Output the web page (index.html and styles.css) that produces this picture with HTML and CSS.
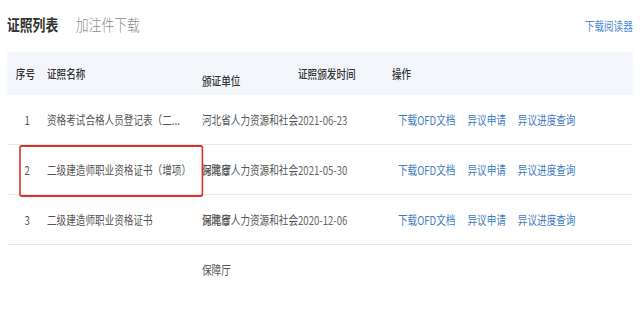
FILE: index.html
```html
<!DOCTYPE html>
<html lang="zh-CN">
<head>
<meta charset="utf-8">
<title>证照列表</title>
<link rel="stylesheet" href="styles.css">
</head>
<body>
<div class="frame">
<div class="page">
  <div class="topbar">
    <div class="tabs">
      <span class="tab tab-active">证照列表</span>
      <span class="tab">加注件下载</span>
    </div>
    <a class="reader">下载阅读器</a>
  </div>
  <div class="table">
    <div class="row head">
      <div class="c-no">序号</div>
      <div class="c-name">证照名称</div>
      <div class="c-unit">颁证单位</div>
      <div class="c-date">证照颁发时间</div>
      <div class="c-op">操作</div>
    </div>
    <div class="row">
      <div class="c-no">1</div>
      <div class="c-name">资格考试合格人员登记表（二...</div>
      <div class="c-unit">河北省人力资源和社会保障厅</div>
      <div class="c-date">2021-06-23</div>
      <div class="c-op"><a>下载OFD文档</a><a>异议申请</a><a>异议进度查询</a></div>
    </div>
    <div class="row marked">
      <div class="c-no">2</div>
      <div class="c-name">二级建造师职业资格证书（增项）</div>
      <div class="c-unit">河北省人力资源和社会保障厅</div>
      <div class="c-date">2021-05-30</div>
      <div class="c-op"><a>下载OFD文档</a><a>异议申请</a><a>异议进度查询</a></div>
      <div class="mark"></div>
    </div>
    <div class="row">
      <div class="c-no">3</div>
      <div class="c-name">二级建造师职业资格证书</div>
      <div class="c-unit">河北省人力资源和社会保障厅</div>
      <div class="c-date">2020-12-06</div>
      <div class="c-op"><a>下载OFD文档</a><a>异议申请</a><a>异议进度查询</a></div>
    </div>
  </div>
</div>
</div>
</body>
</html>
```
FILE: styles.css
```css
html, body {
  margin: 0;
  padding: 0;
  background: #fff;
  overflow: hidden;
}
.frame {
  width: 640px;
  height: 320px;
  overflow: hidden;
}
.page {
  width: 800px;
  transform: scaleX(0.8);
  transform-origin: 0 0;
  padding: 0 9px 0 8.75px;
  box-sizing: border-box;
  font-family: "Noto Sans CJK SC", "Noto Sans", sans-serif;
  font-size: 12px;
  color: #555;
}
.topbar {
  height: 52px;
  display: flex;
  align-items: center;
  justify-content: space-between;
  padding-bottom: 4px;
  box-sizing: border-box;
}
.tabs {
  display: flex;
  gap: 22px;
  align-items: center;
}
.tab {
  font-size: 16px;
  color: #8a8a8a;
  font-weight: 300;
}
.tab-active {
  color: #333;
  font-weight: 700;
}
.reader {
  color: #4a8ad0;
  font-size: 12px;
  margin-top: 2px;
}
.table {
  display: flex;
  flex-direction: column;
}
.row {
  display: flex;
  height: 50px;
  line-height: 50px;
  border-bottom: 1px solid #e8e8e8;
  box-sizing: border-box;
  position: relative;
}
.row.head {
  height: 43px;
  line-height: 43px;
  background: #f3f7fc;
  border-bottom: none;
  color: #333;
  font-weight: 500;
}
.c-no {
  width: 50px;
  padding-left: 22px;
  box-sizing: border-box;
  flex: none;
}
.head .c-no {
  padding-left: 11px;
}
.c-name {
  width: 193.75px;
  flex: none;
  white-space: nowrap;
}
.c-unit {
  width: 120px;
  flex: none;
}
.head .c-unit {
  padding-top: 14px;
  line-height: 29px;
}
.c-date {
  width: 117.5px;
  flex: none;
  color: #666;
}
.head .c-date {
  color: #333;
}
.c-op {
  flex: 1;
  display: flex;
  gap: 15px;
  padding-left: 7.5px;
}
.head .c-op {
  padding-left: 0;
}
.c-op a {
  color: #3d7cc2;
}
.mark {
  position: absolute;
  left: 15px;
  top: 0;
  width: 230px;
  height: 52px;
  border: 2px solid #d8322d;
  border-left-width: 2.5px;
  border-right-width: 2.5px;
  border-radius: 3px;
  box-sizing: border-box;
}
```
